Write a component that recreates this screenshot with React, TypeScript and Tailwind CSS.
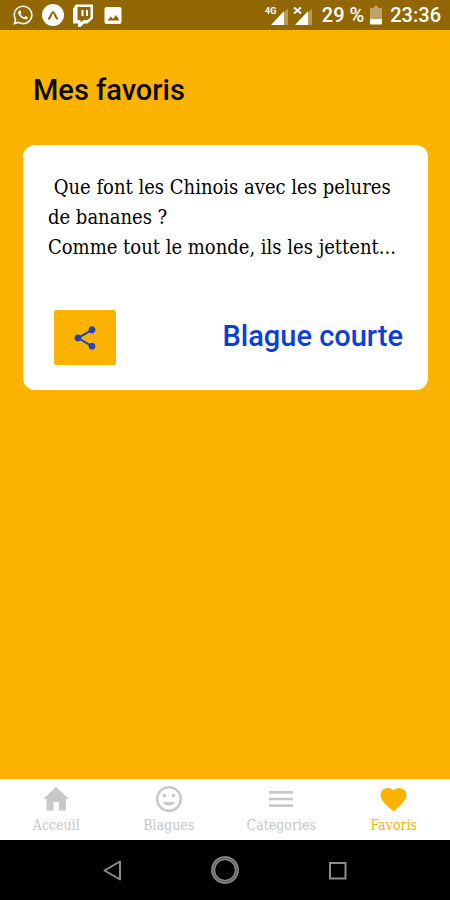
import React, { useState } from 'react';
import { FaWhatsapp } from 'react-icons/fa';
import { MdFavorite, MdMenu, MdShare } from 'react-icons/md';

type Joke = {
  id: number;
  text: string;
  category: string;
};

const FAVORITES: Joke[] = [
  {
    id: 1,
    text: ' Que font les Chinois avec les pelures\nde bananes ?\nComme tout le monde, ils les jettent...',
    category: 'Blague courte',
  },
];

const HomeIcon = () => (
  <svg viewBox="0 0 26 26" className="w-[26px] h-[26px]" fill="currentColor">
    <path d="M13 1L26 13h-3v11.500h-7V16h-5.500v8.500H3.500V13H0.500z" />
  </svg>
);

const SmileIcon = () => (
  <svg viewBox="0 0 26 26" className="w-[26px] h-[26px]" fill="currentColor">
    <circle cx="13" cy="13" r="11.8" fill="none" stroke="currentColor" strokeWidth="2.4" />
    <circle cx="8.500" cy="9.500" r="1.800" />
    <circle cx="17.500" cy="9.500" r="1.800" />
    <path d="M7 16h12c-1 2.500-3.400 3.500-6 3.500S8 18.500 7 16z" />
  </svg>
);

const TABS = [
  { name: 'Acceuil', icon: <HomeIcon /> },
  { name: 'Blagues', icon: <SmileIcon /> },
  { name: 'Categories', icon: <MdMenu size={32} /> },
  { name: 'Favoris', icon: <MdFavorite size={31} /> },
];

const ExpoIcon = () => (
  <svg viewBox="0 0 22 22" className="w-[22px] h-[22px]">
    <circle cx="11" cy="11" r="11" fill="white" />
    <path d="M7 14.500c1.800-1.800 2.600-6.500 4-6.500s2.200 4.700 4 6.500" fill="none" stroke="#926600" strokeWidth="2.200" strokeLinecap="round" />
  </svg>
);

const TwitchIcon = () => (
  <svg viewBox="0 0 22 23" className="w-[22px] h-[23px]">
    <path d="M3.500 0.500H21v14L15.500 19.500H12L8.500 23H6v-3.500H1V5z" fill="white" />
    <path d="M5.500 3h13v10.500L15.500 16h-4L8.500 18.500V16h-3z" fill="#926600" />
    <path d="M10.500 6v6M15 6v6" stroke="white" strokeWidth="2" />
  </svg>
);

const ImageIcon = () => (
  <svg viewBox="0 0 22 22" className="w-[22px] h-[22px]">
    <rect x="2.500" y="3" width="17" height="17" rx="2" fill="white" />
    <path d="M5.500 16.500l3.200-4 2.300 2.500 3-4 3.500 5.500z" fill="#926600" />
  </svg>
);

// Signal triangle, filled on the left side only
const SignalIcon = ({ children }: { children: React.ReactNode }) => (
  <svg viewBox="0 0 23 20" className="w-[23px] h-5">
    <path d="M19 7.500L23 3.500V20h-4z" fill="white" fillOpacity="0.35" />
    <path d="M6 20L19 6v14z" fill="white" />
    {children}
  </svg>
);

const BatteryIcon = () => (
  <svg viewBox="0 0 12 20" className="w-3 h-5">
    <path d="M4 1h4v2h4v11H0V3h4z" fill="white" fillOpacity="0.4" />
    <path d="M0 14h12v4.500a1 1 0 0 1-1 1H1a1 1 0 0 1-1-1z" fill="white" />
  </svg>
);

function StatusBar() {
  return (
    <header className="h-[30px] shrink-0 bg-[#926600] text-white flex items-center justify-between pl-3 pr-[9px]">
      <div className="flex items-center gap-2">
        <FaWhatsapp size={22} />
        <ExpoIcon />
        <TwitchIcon />
        <ImageIcon />
      </div>
      <div className="flex items-center text-xl font-medium">
        <div className="flex gap-px mr-[10px]">
          <SignalIcon>
            <text x="0" y="9" fontSize="9" fontWeight="700" fill="white">4G</text>
          </SignalIcon>
          <SignalIcon>
            <path d="M5 2.500l7 6M12 2.500l-7 6" stroke="white" strokeWidth="2" />
          </SignalIcon>
        </div>
        <span>29 %</span>
        <span className="ml-[6px] mr-2"><BatteryIcon /></span>
        <span>23:36</span>
      </div>
    </header>
  );
}

function JokeCard({ joke }: { joke: Joke }) {
  return (
    <article className="bg-white rounded-xl pt-[27px] pb-[25px] px-[25px]">
      <p className="font-['DejaVu_Serif_Condensed','DejaVu_Serif',serif] text-xl leading-[30px] text-black whitespace-pre">
        {joke.text}
      </p>
      <div className="flex items-center justify-between mt-12 pl-[6px]">
        <button aria-label="Partager" className="w-[62px] h-[55px] rounded-xs bg-[#fbb300] text-[#2344b8] flex items-center justify-center">
          <MdShare size={28} />
        </button>
        <span className="text-[29px] leading-9 font-medium text-[#0b3fd6] pb-[3px]">{joke.category}</span>
      </div>
    </article>
  );
}

export default function App() {
  const [activeTab, setActiveTab] = useState('Favoris');

  return (
    <div className="min-h-screen flex flex-col bg-[#fbb300] font-['Roboto',sans-serif]">
      <StatusBar />

      <main className="flex-1 pl-[23px] pr-[22px] pt-10">
        <h1 className="text-[29px] leading-10 font-medium text-[#0d0a00] pl-[10px] mb-[35px]">Mes favoris</h1>
        {FAVORITES.map((joke) => (
          <JokeCard key={joke.id} joke={joke} />
        ))}
      </main>

      {/* Tab bar */}
      <nav className="h-[61px] shrink-0 bg-white grid grid-cols-4">
        {TABS.map((tab) => (
          <button
            key={tab.name}
            onClick={() => setActiveTab(tab.name)}
            className={`flex flex-col items-center pt-1 font-['DejaVu_Serif_Condensed','DejaVu_Serif',serif] text-sm ${
              activeTab === tab.name ? 'text-[#fbb300]' : 'text-[#c8c8c8]'
            }`}
          >
            <span className="h-8 flex items-center justify-center">{tab.icon}</span>
            <span className="leading-5">{tab.name}</span>
          </button>
        ))}
      </nav>

      {/* Android navigation buttons */}
      <footer className="h-[60px] shrink-0 bg-black text-[#8c8c8c] flex items-center justify-center gap-[85px]">
        <button aria-label="Retour">
          <svg viewBox="0 0 28 28" className="w-7 h-7">
            <path d="M22 5.500v18L6.500 14.500z" fill="none" stroke="currentColor" strokeWidth="2" strokeLinejoin="round" />
          </svg>
        </button>
        <button aria-label="Accueil">
          <svg viewBox="0 0 28 28" className="w-7 h-7">
            <circle cx="14" cy="14" r="12" fill="none" stroke="#5f5f5f" strokeWidth="4" />
            <circle cx="14" cy="14" r="13" fill="none" stroke="currentColor" strokeWidth="1.200" />
            <circle cx="14" cy="14" r="10.500" fill="none" stroke="currentColor" strokeWidth="1.200" />
          </svg>
        </button>
        <button aria-label="Applications">
          <svg viewBox="0 0 28 28" className="w-7 h-7">
            <rect x="6" y="7" width="15.500" height="15.500" fill="none" stroke="currentColor" strokeWidth="2" />
          </svg>
        </button>
      </footer>
    </div>
  );
}
